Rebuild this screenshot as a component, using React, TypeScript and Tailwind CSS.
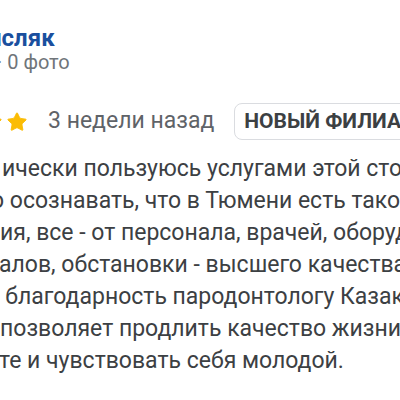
import { Star } from 'lucide-react';

const lines = [
  { text: 'ически пользуюсь услугами этой стоматологии', cls: 'ml-[2px]' },
  { text: 'о осознавать, что в Тюмени есть такое', cls: 'ml-[-9px]' },
  { text: 'ия, все - от персонала, врачей, оборудования', cls: 'ml-[0px]' },
  { text: 'алов, обстановки - высшего качества.', cls: 'ml-[-1px]' },
  { text: 'я благодарность пародонтологу Казаковой', cls: 'ml-[-13px]' },
  { text: 'позволяет продлить качество жизни', cls: 'ml-[0px]' },
  { text: 'те и чувствовать себя молодой.', cls: 'ml-[-1px]' },
];

export default function App() {
  return (
    <div className="w-[400px] h-[400px] overflow-hidden bg-white font-['Roboto',sans-serif]">
      <div className="pt-[24px]">
        {/* имя автора */}
        <div className="ml-[-12px] whitespace-nowrap text-[24px] leading-[28px] font-bold text-[#1a4f9e]">
          исляк
        </div>
        <div className="ml-[-3px] whitespace-nowrap text-[20px] leading-[20px] text-[#70757a]">
          · 0 фото
        </div>

        {/* оценка и дата */}
        <div className="mt-[31px] flex items-center h-[37px] whitespace-nowrap">
          <div className="flex items-center gap-[3px] ml-[-19px]">
            <Star className="w-[22px] h-[22px] shrink-0 text-[#fbbc04]" fill="currentColor" strokeWidth={1} />
            <Star className="w-[22px] h-[22px] shrink-0 text-[#fbbc04]" fill="currentColor" strokeWidth={1} />
          </div>
          <span className="ml-[20px] text-[23px] text-[#5f6368]">3 недели назад</span>
          <div className="ml-[20px] h-[37px] flex items-center rounded-[8px] border border-[#dadce0] pl-[9px] pr-[12px] shrink-0">
            <span className="text-[21px] font-bold text-[#3c4043]">НОВЫЙ ФИЛИАЛ</span>
          </div>
        </div>

        {/* текст отзыва */}
        <div className="mt-[13px] text-[23px] leading-[32px] text-[#3c4043]">
          {lines.map((l, i) => (
            <div key={i} className={`whitespace-nowrap ${l.cls}`}>
              {l.text}
            </div>
          ))}
        </div>
      </div>
    </div>
  );
}
